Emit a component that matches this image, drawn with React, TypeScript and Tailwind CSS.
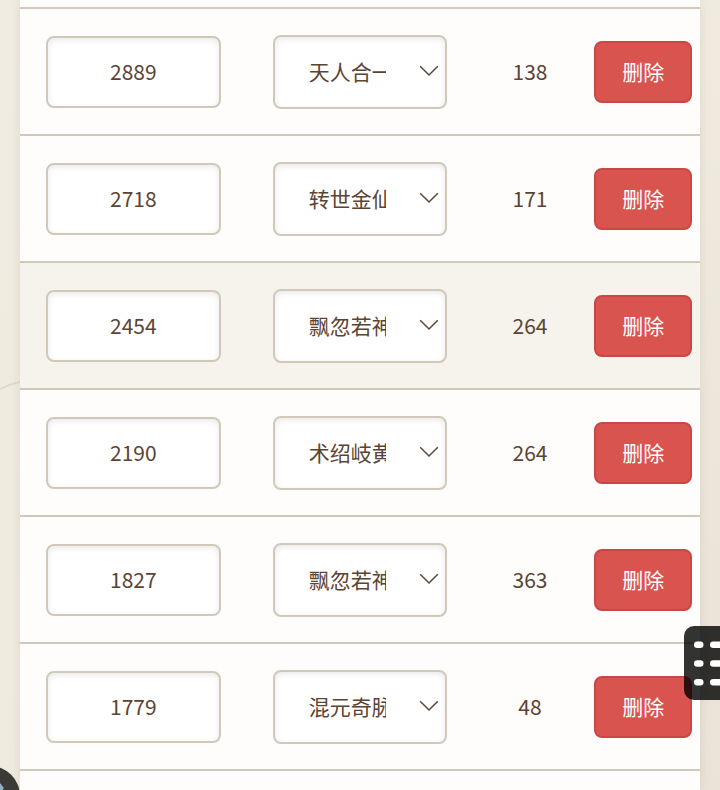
import React from 'react';

const ranks = ['天人合一', '转世金仙', '飘忽若神', '术绍岐黄', '混元奇脉'];

const rows = [
  { value: 2889, rank: '天人合一', diff: 138 },
  { value: 2718, rank: '转世金仙', diff: 171 },
  { value: 2454, rank: '飘忽若神', diff: 264, active: true },
  { value: 2190, rank: '术绍岐黄', diff: 264 },
  { value: 1827, rank: '飘忽若神', diff: 363 },
  { value: 1779, rank: '混元奇脉', diff: 48 },
];

const field =
  'border-2 border-[#d0c8b9] rounded-lg bg-white text-[#5c4433] text-[21px] leading-8 shadow-[inset_0_2px_6px_rgba(0,0,0,0.09)] outline-none';

function Row({ value, rank, diff, active }: { value: number; rank: string; diff: number; active?: boolean }) {
  return (
    <tr className={`h-[127px] border-b-2 border-[#cfc8bb] ${active ? 'bg-[#f6f3ec]' : ''}`}>
      <td className="p-0 text-center align-middle">
        <input
          type="text"
          aria-label="数值"
          defaultValue={value}
          className={`${field} mx-auto block h-[72px] w-[77%] px-4 pb-0.5 text-center`}
        />
      </td>
      <td className="p-0 text-center align-middle">
        <div className="relative mx-auto w-[77%]">
          <select
            aria-label="名称"
            defaultValue={rank}
            className={`${field} block h-[74px] w-full appearance-none pb-0.5 pl-[34px] pr-[59px]`}
          >
            {ranks.map((name) => (
              <option key={name}>{name}</option>
            ))}
          </select>
          <svg
            aria-hidden="true"
            viewBox="0 0 20 12"
            className="pointer-events-none absolute top-[30px] right-2 h-3 w-5"
            fill="none"
            stroke="#5c4838"
            strokeWidth="1.5"
          >
            <path d="M1.2 1.2 10 10 18.8 1.2" />
          </svg>
        </div>
      </td>
      <td className="p-0 pb-0.5 text-center align-middle">{diff}</td>
      <td className="p-0 text-center align-middle">
        <button
          type="button"
          className="h-[62px] w-[98px] rounded-lg border-2 border-[#c94845] bg-[#d9534f] pb-0.5 text-[21px] leading-8 text-white"
        >
          删除
        </button>
      </td>
    </tr>
  );
}

export default function App() {
  return (
    <div className="relative h-screen overflow-hidden bg-linear-to-br from-[#f0ece1] via-[#efebdf] to-[#eae3d7] px-5 font-['Noto_Sans_CJK_SC',sans-serif] text-[21px] leading-8 text-[#5c4433]">
      <svg aria-hidden="true" viewBox="0 0 20 10" className="absolute top-[381px] left-0 h-[10px] w-5" fill="none" stroke="#dfdacb" strokeWidth="2">
        <path d="M0 8Q10 3 20 1" />
      </svg>
      <main className="relative min-h-full bg-[#fefdfb] shadow-[0_0_10px_rgba(100,80,40,0.12)]">
        <table className="w-full table-fixed border-collapse">
          <colgroup>
            <col className="w-1/3" />
            <col className="w-1/3" />
            <col className="w-1/6" />
            <col className="w-1/6" />
          </colgroup>
          <tbody>
            <tr className="h-2 border-b-2 border-[#cfc8bb]">
              <td colSpan={4} className="p-0" />
            </tr>
            {rows.map((row) => (
              <Row key={row.value} {...row} />
            ))}
          </tbody>
        </table>
      </main>
      <button
        type="button"
        aria-label="菜单"
        className="absolute top-[626px] -right-[38px] h-[74px] w-[74px] rounded-[10px] bg-black/80"
      >
        <svg aria-hidden="true" viewBox="0 0 74 74" className="h-full w-full" fill="#fff">
          <rect x="10" y="15.5" width="9.5" height="6.5" rx="3.2" />
          <rect x="26" y="15.5" width="38" height="6.5" rx="3.2" />
          <rect x="10" y="34.2" width="9.5" height="6.5" rx="3.2" />
          <rect x="26" y="34.2" width="38" height="6.5" rx="3.2" />
          <rect x="10" y="53" width="9.5" height="6.5" rx="3.2" />
          <rect x="26" y="53" width="38" height="6.5" rx="3.2" />
        </svg>
      </button>
      <button
        type="button"
        aria-label="助手"
        className="absolute -bottom-9 -left-10 h-[60px] w-[60px] overflow-hidden rounded-full bg-[#3b3a36]"
      >
        <svg aria-hidden="true" viewBox="0 0 60 60" className="h-full w-full" fill="none" stroke="#8fb4c4" strokeWidth="3">
          <path d="M38 17 42 22 38 28" />
        </svg>
      </button>
    </div>
  );
}
